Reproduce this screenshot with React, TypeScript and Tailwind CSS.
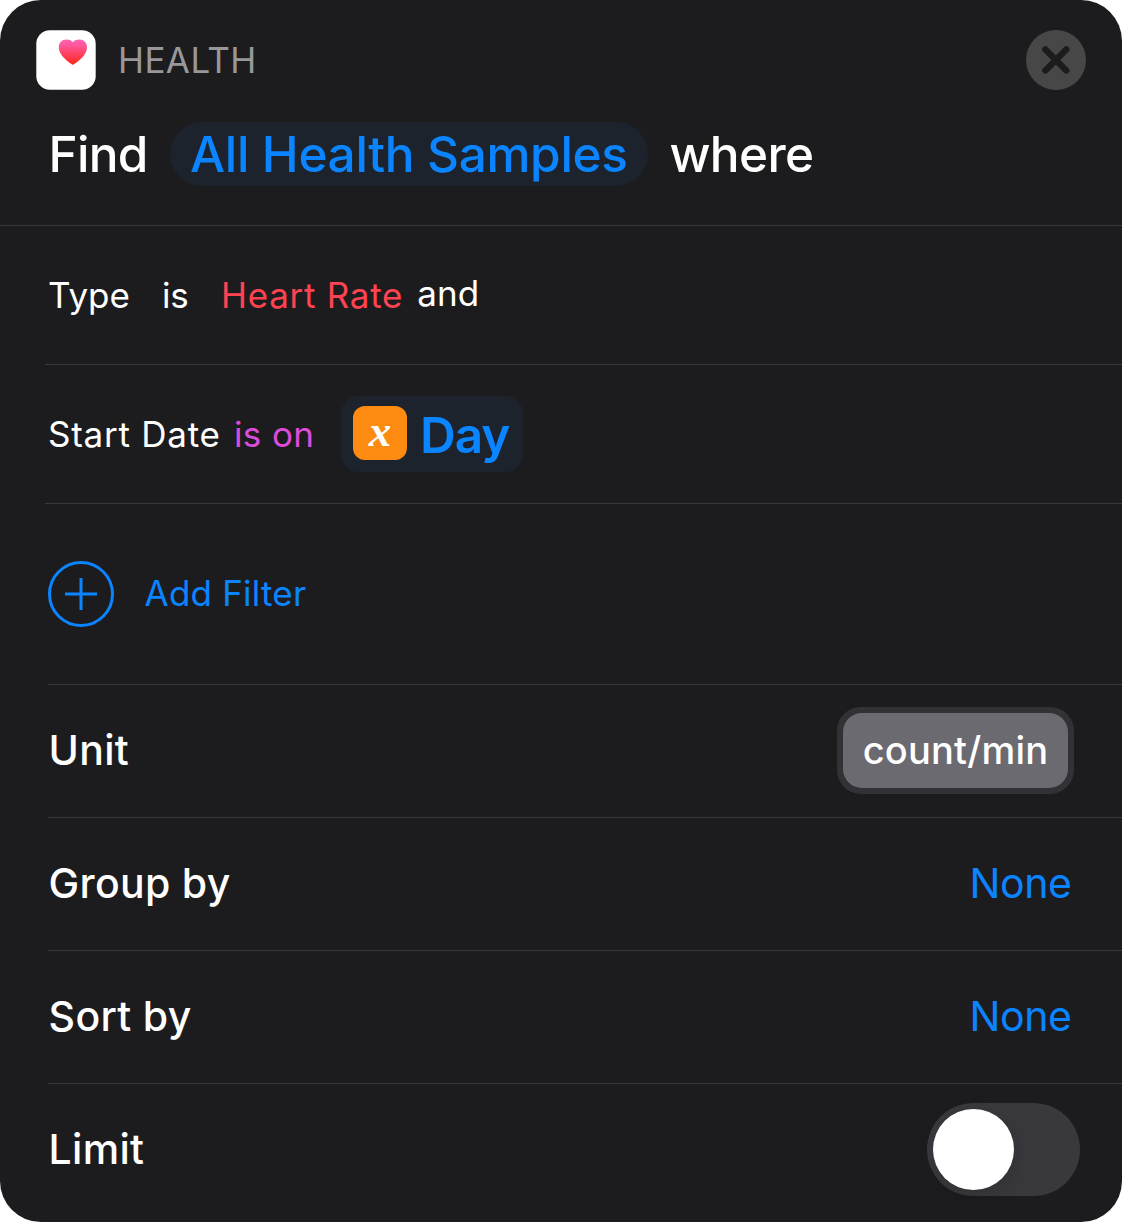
import type { ReactNode } from "react";

function HealthIcon() {
  return (
    <svg className="size-[60px] shrink-0" viewBox="0 0 60 60" aria-hidden="true">
      <defs>
        <linearGradient id="heart" x1="0" y1="0" x2="0" y2="1">
          <stop offset="0" stopColor="#ff63b5" />
          <stop offset="0.2" stopColor="#fd59a0" />
          <stop offset="1" stopColor="#ff2616" />
        </linearGradient>
      </defs>
      <rect x="0.3" y="0.3" width="59.4" height="59.4" rx="13.5" fill="#fff" />
      <path
        d="M36.8 34.8C35.6 34.2 29.5 30.3 26.3 26C24 23 22.8 20.3 22.8 17.2C22.8 12.7 26 9.5 30.2 9.5C33 9.5 35.4 10.2 36.8 12.2C38.3 10.2 40.8 9.5 43.5 9.5C47.8 9.5 51 12.7 51 17.2C51 20.3 49.8 23 47.5 26C44.2 30.3 38 34.2 36.8 34.8Z"
        fill="url(#heart)"
      />
    </svg>
  );
}

function CloseButton() {
  return (
    <button className="flex size-[60px] items-center justify-center rounded-full bg-[#474747]" aria-label="Close">
      <svg className="size-[60px]" viewBox="0 0 60 60" fill="none" stroke="#1c1c1e" strokeWidth="6.4" strokeLinecap="round">
        <path d="M19.4 19.5L40.3 40.4M40.3 19.5L19.4 40.4" />
      </svg>
    </button>
  );
}

function Row({ label, children }: { label: string; children: ReactNode }) {
  return (
    <div className="ml-12 flex h-[133px] items-center border-t border-[#38383a] pb-0.5 text-[41px] leading-none">
      <span className="flex-1 pl-[0.6px] font-medium tracking-[0.3px]">{label}</span>
      {children}
    </div>
  );
}

function NoneValue() {
  return <span className="mr-[50.5px] tracking-[-0.4px] text-[#0a84ff]">None</span>;
}

export default function App() {
  return (
    <div className="h-[1222px] w-[1122px] bg-white font-['Inter',sans-serif] text-white">
      <main className="flex h-full w-full flex-col overflow-hidden rounded-[41px] bg-[#1c1c1e] whitespace-nowrap">
        <header className="h-[225px] pt-[30px]">
          <div className="flex h-[60px] items-center pr-9 pl-9">
            <HealthIcon />
            <span className="ml-[22px] flex-1 text-[35px] leading-none tracking-[0.4px] text-[#98989a]">HEALTH</span>
            <CloseButton />
          </div>
          <div className="mt-8 flex h-16 items-center text-[49.5px] leading-none font-medium">
            <span className="ml-[48.5px] w-[121.5px] pt-[2px] tracking-[-0.75px]">Find</span>
            <span className="flex h-16 w-[478px] items-center rounded-full bg-[#1c232c] pt-[2px] pl-5 tracking-[-0.34px] text-[#0a84ff]">
              All Health Samples
            </span>
            <span className="ml-[21.4px] pt-[2px] tracking-[-0.6px]">where</span>
          </div>
        </header>

        <div className="flex h-[139px] items-center border-t border-[#38383a] text-[35px] leading-none">
          <span className="ml-[48px] w-[114px]">Type</span>
          <span className="w-[59px] tracking-[-0.18px]">is</span>
          <span className="w-[196.3px] tracking-[0.72px] text-[#ff4351]">Heart Rate</span>
          <span className="pb-1">and</span>
        </div>

        <div className="ml-[45px] flex h-[139px] items-center border-t border-[#38383a] text-[35px] leading-none">
          <span className="ml-[3px] w-[186px] tracking-[0.76px]">Start Date</span>
          <span className="w-[107px] tracking-[0.38px] text-[#dc4bdb]">is on</span>
          <span className="mb-[1px] flex h-[76px] w-[182px] items-center rounded-[18px] bg-[#1c232c] pl-3">
            <span className="mb-[1px] flex size-[54px] items-start justify-center rounded-xl bg-[#fd8b12] font-['Liberation_Serif',serif] text-[45px] leading-[51px] font-bold italic">
              x
            </span>
            <span className="ml-[13px] pt-[4px] text-[49.5px] font-[570] tracking-[-1px] text-[#0a84ff]">Day</span>
          </span>
        </div>

        <div className="ml-[45px] flex h-[181px] items-center border-t border-[#38383a] pl-[3px] text-[35px] leading-none text-[#0a84ff]">
          <svg className="size-[66px]" viewBox="0 0 66 66" fill="none" stroke="currentColor" strokeWidth="3">
            <circle cx="33" cy="33" r="31.5" />
            <path d="M17 33H49M33 17V49" />
          </svg>
          <span className="ml-[30.6px] pb-[2px] tracking-[0.2px]">Add Filter</span>
        </div>

        <Row label="Unit">
          <button className="mr-12 flex h-[87px] w-[237px] items-center justify-center rounded-3xl border-6 border-[#323236] bg-[#323236]">
            <span className="flex h-[75px] w-[225px] items-center justify-center rounded-[19px] bg-[#6b6a70] text-[38px] font-medium tracking-[0.19px]">
              count/min
            </span>
          </button>
        </Row>
        <Row label="Group by">
          <NoneValue />
        </Row>
        <Row label="Sort by">
          <NoneValue />
        </Row>
        <Row label="Limit">
          <button className="mr-[42px] flex h-[93px] w-[153px] items-center rounded-full bg-[#39393d] p-1.5" role="switch" aria-checked="false" aria-label="Limit">
            <span className="size-[81px] rounded-full bg-white shadow-[3px_6px_20px_rgba(0,0,0,0.12)]" />
          </button>
        </Row>
      </main>
    </div>
  );
}
